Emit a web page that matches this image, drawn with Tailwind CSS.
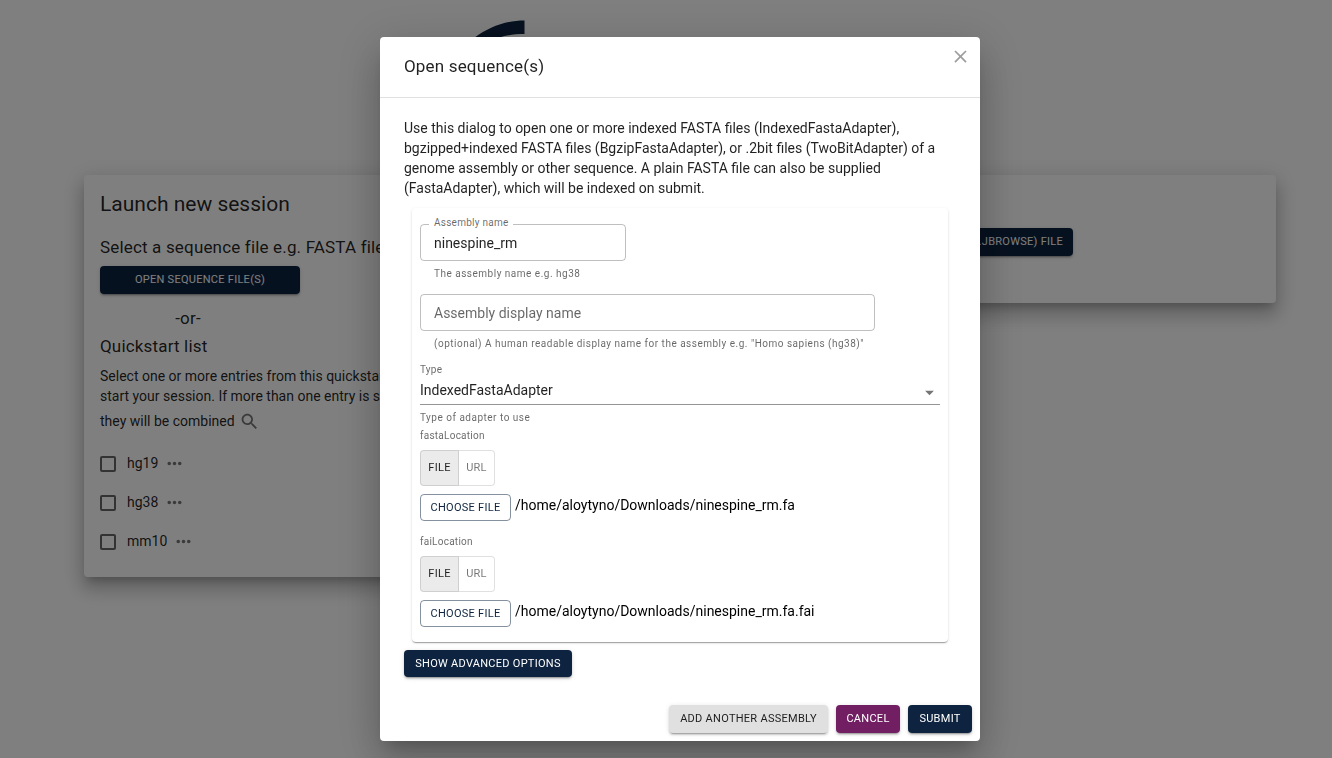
<!DOCTYPE html>
<html lang="en">
<head>
    <meta charset="UTF-8">
    <meta name="viewport" content="width=device-width, initial-scale=1.0">
    <title>JBrowse - Open sequence(s)</title>
    <script src="https://cdn.jsdelivr.net/npm/@tailwindcss/browser@4"></script>
</head>
<body class="bg-white font-['Roboto',sans-serif] text-sm text-black/87 h-screen overflow-hidden">

    <!-- Start screen -->
    <main class="relative pl-[84px] pr-14 pt-[175px]">
        <svg class="absolute left-[440px] top-5" width="85" height="60" viewBox="0 0 85 60" fill="#0d233f" aria-hidden="true">
            <path d="M84.500 0.500 C65 0.500 49 7 34 18 C24 27 16 40 13 60 H27 C30 38 42 14 84.500 14 Z"/>
        </svg>

        <div class="relative grid grid-cols-2 gap-6 items-start">
            <section class="bg-white rounded p-4 shadow-[0_7px_8px_-4px_rgba(0,0,0,0.2),0_12px_17px_2px_rgba(0,0,0,0.14),0_5px_22px_4px_rgba(0,0,0,0.12)]">
                <h1 class="text-[21px] leading-[26px]">Launch new session</h1>
                <h2 class="text-[17px] leading-7 mt-4 tracking-[0.01em]">Select a sequence file e.g. FASTA file</h2>
                <div class="w-[200px] mt-[5px]">
                    <button type="button" class="w-full h-7 rounded bg-[#0d233f] text-white text-[11px] tracking-wide uppercase shadow-[0_3px_1px_-2px_rgba(0,0,0,0.2),0_2px_2px_0_rgba(0,0,0,0.14),0_1px_5px_0_rgba(0,0,0,0.12)]">Open sequence file(s)</button>
                    <p class="text-[17px] leading-[27px] text-center mt-[11px] pr-6 tracking-[0.01em]">-or-</p>
                </div>
                <h2 class="text-[17px] leading-7 tracking-[0.01em]">Quickstart list</h2>
                <p class="leading-5 mt-[6px]">Select one or more entries from this quickstart list to<br>start your session. If more than one entry is selected,</p>
                <p class="flex items-center gap-1 h-[30px]">they will be combined
                    <button type="button" aria-label="Search" class="text-black/54">
                        <svg width="21" height="21" viewBox="0 0 24 24" fill="currentColor"><path d="M15.5 14h-.79l-.28-.27C15.41 12.59 16 11.11 16 9.5 16 5.91 13.09 3 9.5 3S3 5.91 3 9.5 5.91 16 9.5 16c1.61 0 3.09-.59 4.23-1.57l.27.28v.79l5 4.99L20.49 19l-4.99-5zm-6 0C7.01 14 5 11.99 5 9.5S7.01 5 9.5 5 14 7.01 14 9.5 11.99 14 9.5 14z"/></svg>
                    </button>
                </p>
                <ul class="mt-2">
                    <li class="flex items-center h-[39px]">
                        <input type="checkbox" id="hg19" class="appearance-none size-4 border-2 border-black/60 rounded-xs">
                        <label for="hg19" class="ml-[11px] pb-[2px]">hg19</label>
                        <button type="button" aria-label="More" class="ml-[6px] text-black/54"><svg width="21" height="21" viewBox="0 0 24 24" fill="currentColor"><path d="M6 10c-1.100 0-2 .9-2 2s.9 2 2 2 2-.9 2-2-.9-2-2-2zm12 0c-1.100 0-2 .9-2 2s.9 2 2 2 2-.9 2-2-.9-2-2-2zm-6 0c-1.100 0-2 .9-2 2s.9 2 2 2 2-.9 2-2-.9-2-2-2z"/></svg></button>
                    </li>
                    <li class="flex items-center h-[39px]">
                        <input type="checkbox" id="hg38" class="appearance-none size-4 border-2 border-black/60 rounded-xs">
                        <label for="hg38" class="ml-[11px] pb-[2px]">hg38</label>
                        <button type="button" aria-label="More" class="ml-[6px] text-black/54"><svg width="21" height="21" viewBox="0 0 24 24" fill="currentColor"><path d="M6 10c-1.100 0-2 .9-2 2s.9 2 2 2 2-.9 2-2-.9-2-2-2zm12 0c-1.100 0-2 .9-2 2s.9 2 2 2 2-.9 2-2-.9-2-2-2zm-6 0c-1.100 0-2 .9-2 2s.9 2 2 2 2-.9 2-2-.9-2-2-2z"/></svg></button>
                    </li>
                    <li class="flex items-center h-[39px]">
                        <input type="checkbox" id="mm10" class="appearance-none size-4 border-2 border-black/60 rounded-xs">
                        <label for="mm10" class="ml-[11px] pb-[2px]">mm10</label>
                        <button type="button" aria-label="More" class="ml-[6px] text-black/54"><svg width="21" height="21" viewBox="0 0 24 24" fill="currentColor"><path d="M6 10c-1.100 0-2 .9-2 2s.9 2 2 2 2-.9 2-2-.9-2-2-2zm12 0c-1.100 0-2 .9-2 2s.9 2 2 2 2-.9 2-2-.9-2-2-2zm-6 0c-1.100 0-2 .9-2 2s.9 2 2 2 2-.9 2-2-.9-2-2-2z"/></svg></button>
                    </li>
                </ul>
            </section>

            <section class="bg-white rounded p-4 pb-[47px] shadow-[0_7px_8px_-4px_rgba(0,0,0,0.2),0_12px_17px_2px_rgba(0,0,0,0.14),0_5px_22px_4px_rgba(0,0,0,0.12)]">
                <h1 class="text-[21px] leading-[26px]">Recent sessions</h1>
                <button type="button" class="mt-[11px] w-[365px] h-7 pr-[10px] rounded bg-[#0d233f] text-white text-[11px] tracking-wide text-right uppercase shadow-[0_3px_1px_-2px_rgba(0,0,0,0.2),0_2px_2px_0_rgba(0,0,0,0.14),0_1px_5px_0_rgba(0,0,0,0.12)]">Open saved session (.jbrowse) file</button>
            </section>
        </div>
    </main>

    <!-- Dialog -->
    <div class="fixed inset-0 bg-black/50 flex items-center justify-center pl-7 pt-5">
        <form role="dialog" aria-labelledby="dialogTitle" class="w-full max-w-[600px] bg-white rounded shadow-[0_11px_15px_-7px_rgba(0,0,0,0.2),0_24px_38px_3px_rgba(0,0,0,0.14),0_9px_46px_8px_rgba(0,0,0,0.12)]">
            <header class="flex justify-between border-b border-black/12 pl-6 pr-[9px] h-[61px]">
                <h2 id="dialogTitle" class="text-[17px] leading-7 mt-[15px] tracking-[0.01em]">Open sequence(s)</h2>
                <button type="button" aria-label="Close" class="self-start mt-[9px] text-[#9e9e9e]">
                    <svg width="21" height="21" viewBox="0 0 24 24" fill="currentColor"><path d="M19 6.410L17.590 5 12 10.590 6.410 5 5 6.410 10.590 12 5 17.590 6.410 19 12 13.410 17.590 19 19 17.590 13.410 12z"/></svg>
                </button>
            </header>

            <div class="px-6 pt-5">
                <p class="leading-5 pb-[10px]">Use this dialog to open one or more indexed FASTA files (IndexedFastaAdapter), bgzipped+indexed FASTA files (BgzipFastaAdapter), or .2bit files (TwoBitAdapter) of a genome assembly or other sequence. A plain FASTA file can also be supplied (FastaAdapter), which will be indexed on submit.</p>

                <div class="mx-2 p-2 pt-4 pb-[15px] rounded shadow-[0_2px_1px_-1px_rgba(0,0,0,0.2),0_1px_1px_0_rgba(0,0,0,0.14),0_1px_3px_0_rgba(0,0,0,0.12)]">
                    <div class="relative w-[206px]">
                        <label for="assemblyName" class="absolute left-[9px] -top-[7px] px-[5px] bg-white text-[10px] leading-3 tracking-wide text-black/60">Assembly name</label>
                        <input type="text" id="assemblyName" value="ninespine_rm" class="block w-full h-[37px] px-[13px] border border-black/25 rounded">
                    </div>
                    <p class="mt-[5px] ml-[14px] text-[10px] leading-4 tracking-wider text-black/60">The assembly name e.g. hg38</p>

                    <input type="text" aria-label="Assembly display name" placeholder="Assembly display name" class="block mt-3 w-[455px] h-[37px] px-[13px] border border-black/25 rounded placeholder:text-black/60">
                    <p class="mt-[5px] ml-[14px] text-[10px] leading-4 tracking-wider text-black/60">(optional) A human readable display name for the assembly e.g. "Homo sapiens (hg38)"</p>

                    <label for="adapterType" class="block mt-[10px] text-[10px] leading-4 tracking-wide text-black/60">Type</label>
                    <div class="relative">
                        <select id="adapterType" class="appearance-none block w-full h-[27px] pt-1 pb-[5px] leading-[17px] border-b border-black/42">
                            <option>IndexedFastaAdapter</option>
                            <option>BgzipFastaAdapter</option>
                            <option>TwoBitAdapter</option>
                            <option>FastaAdapter</option>
                        </select>
                        <svg class="absolute right-0 top-1 pointer-events-none" width="21" height="21" viewBox="0 0 24 24" fill="#757575"><path d="M7 10l5 5 5-5z"/></svg>
                    </div>
                    <p class="mt-[5px] text-[10px] leading-4 tracking-wider text-black/60">Type of adapter to use</p>

                    <p class="mt-[2px] text-[10px] leading-4 tracking-wide text-black/60">fastaLocation</p>
                    <div class="flex mt-[6px] text-[11px] tracking-wide">
                        <button type="button" class="w-[39px] h-9 border border-black/12 rounded-l bg-black/8">FILE</button>
                        <button type="button" class="w-9 h-9 border border-l-0 border-black/12 rounded-r text-black/54">URL</button>
                    </div>
                    <div class="flex mt-2 gap-1">
                        <button type="button" class="w-[91px] h-[27px] border border-[#0d233f]/50 rounded text-[#0d233f] text-[11px] tracking-wide uppercase">Choose file</button>
                        <span class="text-black leading-[22px]">/home/aloytyno/Downloads/ninespine_rm.fa</span>
                    </div>

                    <p class="mt-[13px] text-[10px] leading-4 tracking-wide text-black/60">faiLocation</p>
                    <div class="flex mt-[6px] text-[11px] tracking-wide">
                        <button type="button" class="w-[39px] h-9 border border-black/12 rounded-l bg-black/8">FILE</button>
                        <button type="button" class="w-9 h-9 border border-l-0 border-black/12 rounded-r text-black/54">URL</button>
                    </div>
                    <div class="flex mt-2 gap-1">
                        <button type="button" class="w-[91px] h-[27px] border border-[#0d233f]/50 rounded text-[#0d233f] text-[11px] tracking-wide uppercase">Choose file</button>
                        <span class="text-black leading-[22px]">/home/aloytyno/Downloads/ninespine_rm.fa.fai</span>
                    </div>
                </div>

                <button type="button" class="block mt-2 w-[168px] h-[27px] rounded bg-[#0d233f] text-white text-[11px] tracking-wide uppercase shadow-[0_3px_1px_-2px_rgba(0,0,0,0.2),0_2px_2px_0_rgba(0,0,0,0.14),0_1px_5px_0_rgba(0,0,0,0.12)]">Show advanced options</button>
            </div>

            <footer class="flex justify-end gap-2 p-2 pt-7 text-[11px] tracking-wide">
                <button type="button" class="w-[159px] h-7 rounded bg-[#e0e0e0] uppercase shadow-[0_3px_1px_-2px_rgba(0,0,0,0.2),0_2px_2px_0_rgba(0,0,0,0.14),0_1px_5px_0_rgba(0,0,0,0.12)]">Add another assembly</button>
                <button type="button" class="w-16 h-7 rounded bg-[#721e63] text-white uppercase shadow-[0_3px_1px_-2px_rgba(0,0,0,0.2),0_2px_2px_0_rgba(0,0,0,0.14),0_1px_5px_0_rgba(0,0,0,0.12)]">Cancel</button>
                <button type="submit" class="w-16 h-7 rounded bg-[#0d233f] text-white uppercase shadow-[0_3px_1px_-2px_rgba(0,0,0,0.2),0_2px_2px_0_rgba(0,0,0,0.14),0_1px_5px_0_rgba(0,0,0,0.12)]">Submit</button>
            </footer>
        </form>
    </div>
</body>
</html>
